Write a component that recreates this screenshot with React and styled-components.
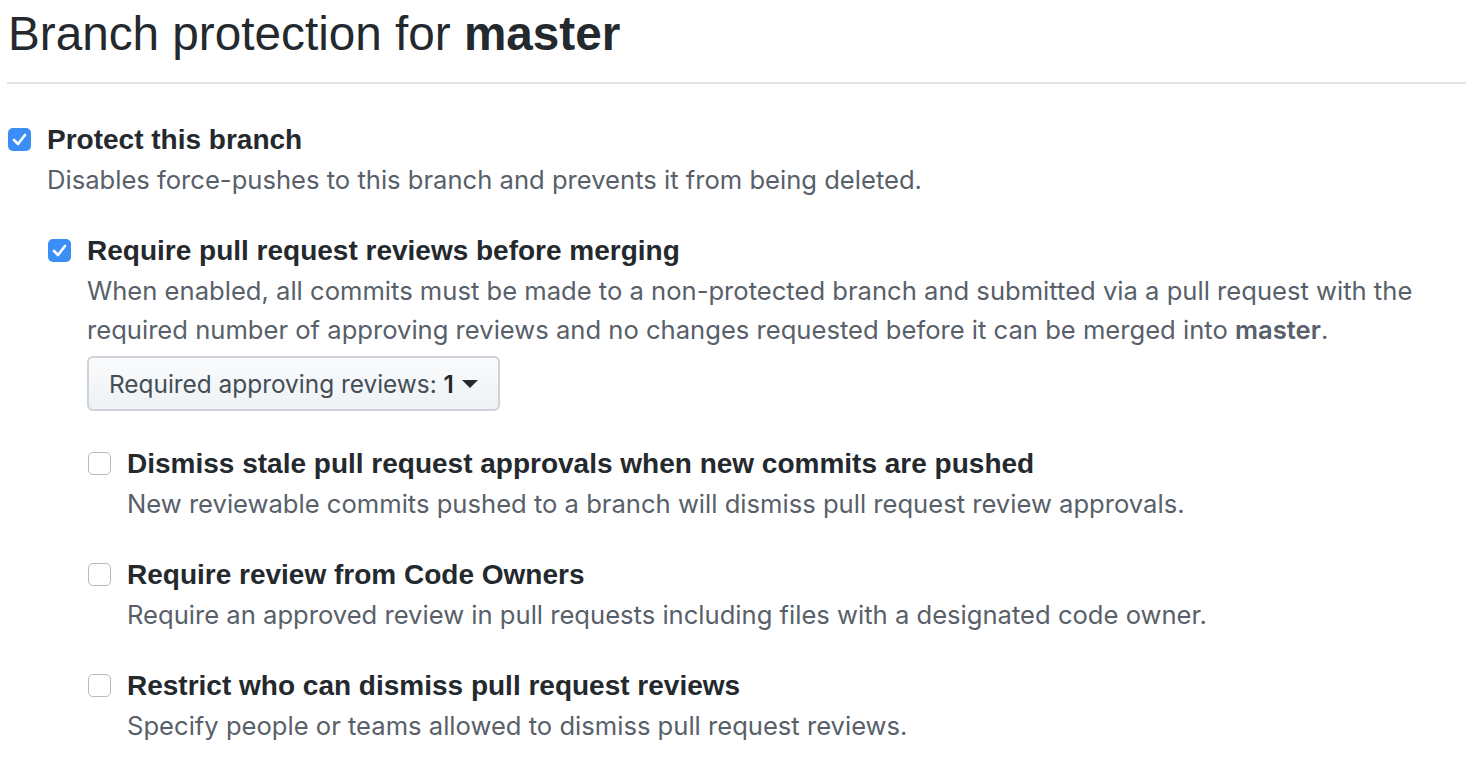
import styled, { createGlobalStyle } from "styled-components";

const GlobalStyle = createGlobalStyle`
  html, body {
    margin: 0;
    padding: 0;
    background: #fff;
  }
  body {
    font-family: "Liberation Sans", Arial, sans-serif;
    color: #24292e;
  }
`;

const Page = styled.div`
  padding: 0 6px 0 7px;
`;

const Heading = styled.h1`
  margin: 0;
  padding: 6px 0 0 1px;
  height: 76px;
  font-family: "Liberation Sans", Arial, sans-serif;
  font-size: 47.7px;
  font-weight: 400;
  line-height: 56px;
  border-bottom: 2px solid #e1e4e8;
  color: #24292e;

  strong {
    font-weight: 700;
  }
`;

const List = styled.div`
  display: flex;
  flex-direction: column;
  gap: ${(p) => p.$gap || 0}px;
  margin-top: ${(p) => p.$top || 0}px;
`;

const Option = styled.div`
  display: grid;
  grid-template-columns: 40px 1fr;
  align-items: start;
`;

const Box = styled.span`
  box-sizing: border-box;
  width: 23px;
  height: 23px;
  margin: 8px 0 0 1px;
  border-radius: 5px;
  display: flex;
  align-items: center;
  justify-content: center;
  background: ${(p) => (p.$checked ? "#3a8ef5" : "#fff")};
  border: ${(p) => (p.$checked ? "none" : "1.5px solid #b9b9b9")};
`;

const Title = styled.div`
  font-size: 28px;
  font-weight: 700;
  line-height: 40px;
  color: #24292e;
`;

const Note = styled.div`
  font-family: Inter, "Liberation Sans", sans-serif;
  font-size: 25.6px;
  line-height: 39px;
  color: #586069;

  strong {
    font-weight: 600;
  }
`;

const Button = styled.button`
  box-sizing: border-box;
  margin: 7px 0 0 0;
  height: 55px;
  padding: 0 20px;
  display: inline-flex;
  align-items: center;
  gap: 6px;
  font-family: Inter, "Liberation Sans", sans-serif;
  font-size: 24.4px;
  color: #444d56;
  background: linear-gradient(#fafbfc, #eff3f6 90%);
  border: 2px solid #cfd2d6;
  border-radius: 6px;

  b {
    font-weight: 600;
    color: #24292e;
  }
`;

const Caret = styled.span`
  width: 0;
  height: 0;
  border-left: 8px solid transparent;
  border-right: 8px solid transparent;
  border-top: 8px solid #24292e;
  margin-left: 2px;
`;

function Check({ checked }) {
  return (
    <Box $checked={checked}>
      {checked && (
        <svg width="15" height="13" viewBox="0 0 15 13">
          <path
            d="M2 7 L6 11 L13 2"
            fill="none"
            stroke="#fff"
            strokeWidth="2.6"
            strokeLinecap="round"
            strokeLinejoin="round"
          />
        </svg>
      )}
    </Box>
  );
}

function Item({ checked, title, children }) {
  return (
    <Option>
      <Check checked={checked} />
      <div>
        <Title>{title}</Title>
        {children}
      </div>
    </Option>
  );
}

export default function App() {
  return (
    <Page>
      <GlobalStyle />
      <Heading>
        Branch protection for <strong>master</strong>
      </Heading>
      <List $top={36}>
        <Item checked title="Protect this branch">
          <Note>Disables force-pushes to this branch and prevents it from being deleted.</Note>
          <List $top={32}>
            <Item checked title="Require pull request reviews before merging">
              <Note>
                When enabled, all commits must be made to a non-protected branch and submitted via a pull request with the
                required number of approving reviews and no changes requested before it can be merged into{" "}
                <strong>master</strong>.
              </Note>
              <Button type="button">
                <span>
                  Required approving reviews: <b>1</b>
                </span>
                <Caret />
              </Button>
              <List $top={33} $gap={32}>
                <Item title="Dismiss stale pull request approvals when new commits are pushed">
                  <Note>New reviewable commits pushed to a branch will dismiss pull request review approvals.</Note>
                </Item>
                <Item title="Require review from Code Owners">
                  <Note>Require an approved review in pull requests including files with a designated code owner.</Note>
                </Item>
                <Item title="Restrict who can dismiss pull request reviews">
                  <Note>Specify people or teams allowed to dismiss pull request reviews.</Note>
                </Item>
              </List>
            </Item>
          </List>
        </Item>
      </List>
    </Page>
  );
}
